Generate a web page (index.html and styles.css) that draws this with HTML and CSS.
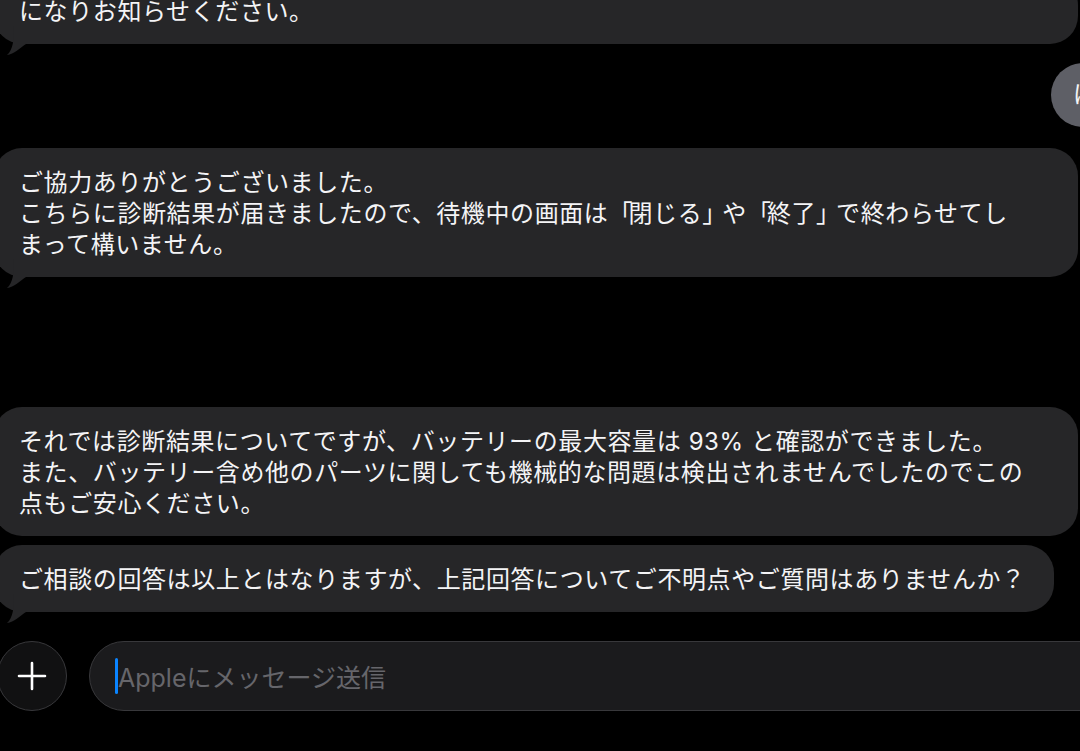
FILE: index.html
```html
<!DOCTYPE html>
<html lang="ja">
<head>
  <meta charset="UTF-8" />
  <meta name="viewport" content="width=device-width, initial-scale=1.0"/>
  <title>Apple サポート チャット</title>
  <link rel="stylesheet" href="styles.css">
</head>
<body>

<div class="chat">
  <div class="bubble wide first">
    になりお知らせください。
    <svg class="tail" width="36" height="30" viewBox="0 0 36 30"><path d="M20 0 C20 14 19 24 13 29 C20 28 26 22 32 18 L32 0 Z"/></svg>
  </div>

  <div class="row-out">
    <div class="pill">はい</div>
  </div>

  <div class="bubble wide b2">
    ご協力ありがとうございました。<br>
    こちらに診断結果が届きましたので、待機中の画面は<span class="kk">「</span>閉じる<span class="kk">」</span>や<span class="kk">「</span>終了<span class="kk">」</span>で終わらせてし<br>
    まって構いません。
    <svg class="tail" width="36" height="30" viewBox="0 0 36 30"><path d="M20 0 C20 14 19 24 13 29 C20 28 26 22 32 18 L32 0 Z"/></svg>
  </div>

  <div class="bubble wide b3">
    それでは診断結果についてですが、バッテリーの最大容量は 93% と確認ができました。<br>
    また、バッテリー含め他のパーツに関しても機械的な問題は検出されませんでしたのでこの<br>
    点もご安心ください。
  </div>

  <div class="bubble b4">
    ご相談の回答は以上とはなりますが、上記回答についてご不明点やご質問はありませんか？
    <svg class="tail" width="36" height="30" viewBox="0 0 36 30"><path d="M20 0 C20 14 19 24 13 29 C20 28 26 22 32 18 L32 0 Z"/></svg>
  </div>
</div>

<div class="composer">
  <button class="add">
    <svg width="30" height="30" viewBox="0 0 30 30"><path d="M15 2 V28 M2 15 H28" stroke="#fff" stroke-width="2.6" stroke-linecap="round"/></svg>
  </button>
  <div class="field">
    <span class="caret"></span>
    <span class="placeholder">Appleにメッセージ送信</span>
  </div>
</div>

</body>
</html>
```

FILE: styles.css
```css
body {
  margin: 0;
  height: 751px;
  overflow: hidden;
  background: #000;
  font-family: "Inter", "Noto Sans CJK JP", sans-serif;
  color: #f4f4f6;
}
.chat {
  display: flex;
  flex-direction: column;
  align-items: flex-start;
  margin-top: -23px;
}
.bubble {
  position: relative;
  margin-left: -6px;
  padding: 19px 28px 17px 25px;
  background: #262628;
  border-radius: 28px;
  font-size: 24px;
  line-height: 31px;
  letter-spacing: 0.6px;
  white-space: nowrap;
}
.kk { letter-spacing: -4px; }
.wide { width: 1031px; }
.tail {
  position: absolute;
  left: 0;
  bottom: -12px;
  fill: #262628;
}
.row-out {
  align-self: stretch;
  display: flex;
  justify-content: flex-end;
  margin-top: 19px;
  margin-right: -60px;
}
.pill {
  height: 64px;
  line-height: 64px;
  padding: 0 22px;
  background: #5e5f66;
  border-radius: 32px;
  font-size: 24px;
  width: 45px;
  overflow: hidden;
}
.b2 { margin-top: 21px; }
.b3 { margin-top: 130px; }
.b4 { margin-top: 9px; }
.composer {
  display: flex;
  align-items: center;
  gap: 22px;
  margin-top: 29px;
}
.add {
  flex: none;
  width: 70px;
  height: 70px;
  margin-left: -3px;
  border-radius: 50%;
  background: #111112;
  border: 1.5px solid #38383b;
  display: flex;
  align-items: center;
  justify-content: center;
  padding: 0;
}
.field {
  flex: none;
  width: 1100px;
  height: 70px;
  box-sizing: border-box;
  border-radius: 35px;
  background: #1b1b1d;
  border: 1.5px solid #38383b;
  display: flex;
  align-items: center;
  padding-left: 25px;
}
.caret {
  width: 3px;
  height: 36px;
  background: #0a84ff;
  border-radius: 1.5px;
}
.placeholder {
  font-size: 25px;
  color: #66666b;
  margin-left: 0;
}
```
